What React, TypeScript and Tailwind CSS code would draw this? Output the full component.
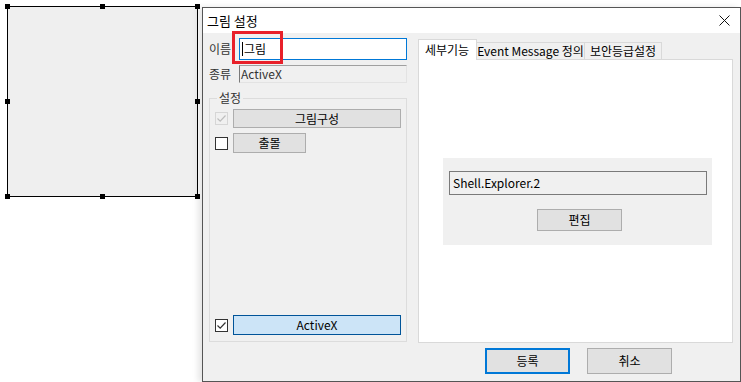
import React from 'react';

const font = "font-['Noto_Sans_CJK_KR','Noto_Sans',sans-serif]";

function Handle({ className }: { className: string }) {
  return <div className={`absolute w-[5px] h-[5px] bg-black ${className}`} />;
}

function Check({ checked, disabled }: { checked?: boolean; disabled?: boolean }) {
  return (
    <div
      className={`w-[13px] h-[13px] flex items-center justify-center shrink-0 border ${
        disabled ? 'border-[#d6d6d6] bg-[#f0f0f0]' : 'border-[#333] bg-white'
      }`}
    >
      {checked ? (
        <svg width="11" height="11" viewBox="0 0 11 11">
          <path d="M1.5 5.5 L4.2 8.2 L9.5 2.5" fill="none" stroke={disabled ? '#bdbdbd' : '#333'} strokeWidth="1.2" />
        </svg>
      ) : null}
    </div>
  );
}

export default function App() {
  return (
    <div className={`w-[741px] h-[382px] bg-white flex items-start overflow-hidden text-[12px] text-black ${font}`}>
      {/* selected picture object on the canvas */}
      <div className="relative ml-[7px] mt-[6px] w-[191px] h-[191px] border border-black bg-[#efefef] shrink-0">
        <Handle className="left-[-3px] top-[-3px]" />
        <Handle className="left-[92px] top-[-3px]" />
        <Handle className="right-[-3px] top-[-3px]" />
        <Handle className="left-[-3px] top-[92px]" />
        <Handle className="right-[-3px] top-[92px]" />
        <Handle className="left-[-3px] bottom-[-3px]" />
        <Handle className="left-[92px] bottom-[-3px]" />
        <Handle className="right-[-3px] bottom-[-3px]" />
      </div>

      {/* dialog */}
      <div className="relative ml-[4px] mt-[7px] w-[539px] h-[375px] shrink-0 border border-[#555] bg-[#f0f0f0] flex flex-col shadow-[-4px_0_6px_rgba(0,0,0,0.10)]">
        <div className="h-[25px] bg-white flex items-center justify-between pl-[4px] pr-[10px]">
          <span className="text-[13px]">그림 설정</span>
          <svg width="11" height="11" viewBox="0 0 11 11">
            <path d="M0.5 0.5 L10.5 10.5 M10.5 0.5 L0.5 10.5" stroke="#111" strokeWidth="1" />
          </svg>
        </div>

        <div className="flex-1 flex flex-col">
          <div className="flex pl-[6px] pt-[5px]">
            {/* left column */}
            <div className="w-[198px] flex flex-col">
              <div className="flex items-center h-[22px]">
                <span className="w-[30px] text-[#333]">이름</span>
                <div className="w-[168px] h-[22px] bg-white border border-[#0078d7] flex items-center pl-[2px]">
                  <span className="border-l border-black pl-[1px] leading-[14px]">그림</span>
                </div>
              </div>
              <div className="flex items-center h-[18px] mt-[5px]">
                <span className="w-[30px] text-[#333]">종류</span>
                <div className="w-[168px] h-[18px] border border-t-[#a0a0a0] border-l-[#7a7a7a] border-r-[#e3e3e3] border-b-[#e3e3e3] flex items-center pl-[1px] text-[#333]">
                  ActiveX
                </div>
              </div>

              <div className="relative mt-[15px] h-[244px] border border-[#dcdcdc] flex flex-col px-[5px]">
                <span className="absolute left-[7px] top-[-9px] bg-[#f0f0f0] px-[2px] leading-[16px] text-[#333]">설정</span>
                <div className="flex items-center gap-[5px] mt-[10px]">
                  <Check checked disabled />
                  <div className="w-[169px] h-[19px] bg-[#e1e1e1] border border-[#adadad] flex items-center justify-center">
                    그림구성
                  </div>
                </div>
                <div className="flex items-center gap-[5px] mt-[5px]">
                  <Check />
                  <div className="w-[73px] h-[20px] bg-[#e1e1e1] border border-[#adadad] flex items-center justify-center">
                    출몰
                  </div>
                </div>
                <div className="flex items-center gap-[5px] mt-auto mb-[6px]">
                  <Check checked />
                  <div className="w-[169px] h-[20px] bg-[#cce4f7] border border-[#005499] flex items-center justify-center">
                    ActiveX
                  </div>
                </div>
              </div>
            </div>

            {/* tabs */}
            <div className="ml-[11px] w-[315px] flex flex-col">
              <div className="flex items-end h-[21px]">
                <div className="h-[21px] w-[59px] bg-white border border-b-0 border-[#d9d9d9] pl-[6px] flex items-center relative top-[1px] z-10">
                  세부기능
                </div>
                <div className="h-[17px] w-[108px] border border-l-0 border-b-0 border-[#d9d9d9] flex items-center justify-center">
                  Event Message 정의
                </div>
                <div className="h-[17px] w-[77px] border border-l-0 border-b-0 border-[#d9d9d9] flex items-center justify-center">
                  보안등급설정
                </div>
              </div>
              <div className="h-[284px] bg-white border border-[#d9d9d9] flex flex-col pl-[24px] pt-[98px]">
                <div className="w-[269px] h-[87px] bg-[#f0f0f0] flex flex-col pl-[6px] pt-[13px]">
                  <div className="w-[258px] h-[24px] border border-[#7a7a7a] flex items-center pl-[3px]">
                    Shell.Explorer.2
                  </div>
                  <div className="ml-[88px] mt-[14px] w-[85px] h-[22px] bg-[#e1e1e1] border border-[#adadad] flex items-center justify-center">
                    편집
                  </div>
                </div>
              </div>
            </div>
          </div>

          <div className="flex mt-[5px] ml-[282px] gap-[17px]">
            <div className="w-[85px] h-[26px] bg-[#e1e1e1] border-2 border-[#0078d7] flex items-center justify-center">
              등록
            </div>
            <div className="w-[85px] h-[26px] bg-[#e1e1e1] border border-[#adadad] flex items-center justify-center">
              취소
            </div>
          </div>
        </div>

        {/* red highlight annotation */}
        <div className="absolute left-[29px] top-[23px] w-[51px] h-[33px] border-[3px] border-[#e8202a]" />
      </div>
    </div>
  );
}
